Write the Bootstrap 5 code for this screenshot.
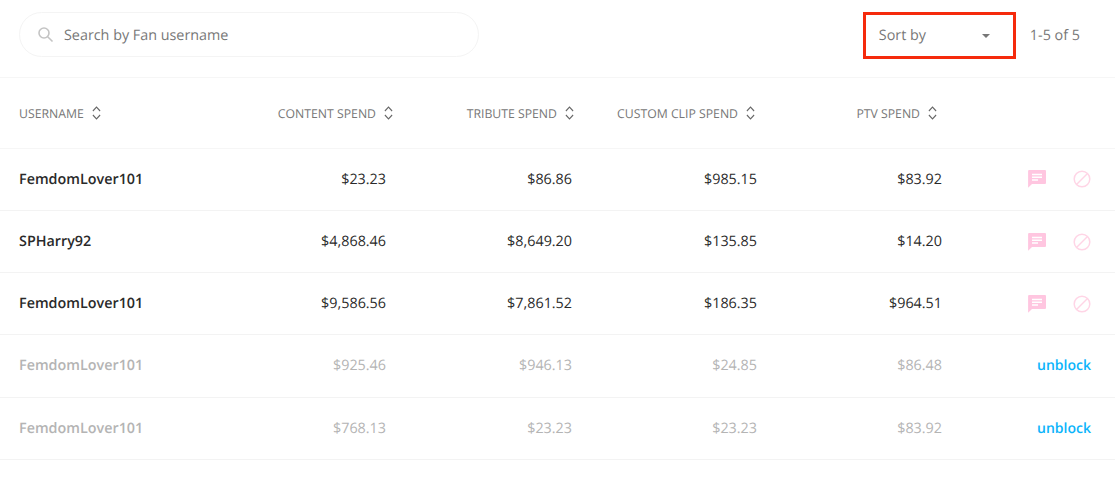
<!DOCTYPE html>
<html lang="en"><head><meta charset="utf-8"><title>Fans</title>
<link href="https://cdn.jsdelivr.net/npm/bootstrap@5.3.0/dist/css/bootstrap.min.css" rel="stylesheet">
<style>
html,body{background:#fff;font-family:"Open Sans",sans-serif;color:#222;overflow:hidden;text-rendering:geometricPrecision}
.topbar{height:78px;border-bottom:1px solid #f6f6f6;padding:12px 35px 0 19px}
.searchbox{width:460px;height:45px;border:1px solid #f4f4f4;border-radius:23px;padding-left:17px;color:#777;font-size:14.35px;gap:10px}
.searchbox span{position:relative;top:1px}
.sortbox{width:153px;height:47px;border:3px solid #f52a0c;padding:0 23px 0 13px;color:#777;font-size:14.35px;margin-right:14px}
.caretmark{width:0;height:0;border-left:4.5px solid transparent;border-right:4.5px solid transparent;border-top:4.5px solid #777}
.pagecount{font-size:14.35px;color:#777}
.fans{table-layout:fixed;width:1115px;margin:0;border-collapse:collapse}
.fans th{height:70px;font-size:12.25px;font-weight:400;color:#777;text-align:right;border-bottom:1px solid #f6f6f6;padding:2px 0 0;white-space:nowrap;vertical-align:middle}
.fans td{height:62.25px;font-size:14.35px;text-align:right;border-bottom:1px solid #f3f3f3;padding:.5px 14px 0 0;vertical-align:middle;color:#2a2a2a}
.fans th:first-child,.fans td:first-child{text-align:left;padding-left:19px}
.fans td:first-child{font-weight:600;color:#2a2a2a}
.fans th.h1{padding-right:7px}.fans th.h2{padding-right:12px}.fans th.h3{padding-right:16px}.fans th.h4{padding-right:19px}
.fans tr.blocked td{color:#b4b4b4}
.fans td.acts{padding-right:24px}
.sorter{margin-left:8px;vertical-align:-2px}
.unblock{color:#0bb4fb;font-weight:600;text-decoration:none;font-size:14px}
.acticons{gap:27px}
</style></head><body>
<div class="topbar d-flex align-items-start justify-content-between">
  <div class="searchbox d-flex align-items-center">
    <svg width="17" height="17" viewBox="0 0 17 17" fill="none" stroke="#c4c4c4" stroke-width="1.6"><circle cx="7" cy="7" r="5"/><path d="M10.7 10.7 15.500 15.500"/></svg>
    <span>Search by Fan username</span>
  </div>
  <div class="d-flex align-items-center">
    <div class="sortbox d-flex align-items-center justify-content-between"><span>Sort by</span><span class="caretmark"></span></div>
    <span class="pagecount">1-5 of 5</span>
  </div>
</div>
<table class="fans">
<colgroup><col style="width:200px"><col style="width:200px"><col style="width:186px"><col style="width:185px"><col style="width:185px"><col></colgroup>
<thead><tr>
<th>USERNAME<svg class="sorter" width="9" height="14" viewBox="0 0 10 14" preserveAspectRatio="none" fill="none" stroke="#666" stroke-width="1.2"><path d="M1 5 5 1 9 5M1 9l4 4 4-4"/></svg></th>
<th class="h1">CONTENT SPEND<svg class="sorter" width="9" height="14" viewBox="0 0 10 14" preserveAspectRatio="none" fill="none" stroke="#666" stroke-width="1.2"><path d="M1 5 5 1 9 5M1 9l4 4 4-4"/></svg></th>
<th class="h2">TRIBUTE SPEND<svg class="sorter" width="9" height="14" viewBox="0 0 10 14" preserveAspectRatio="none" fill="none" stroke="#666" stroke-width="1.2"><path d="M1 5 5 1 9 5M1 9l4 4 4-4"/></svg></th>
<th class="h3">CUSTOM CLIP SPEND<svg class="sorter" width="9" height="14" viewBox="0 0 10 14" preserveAspectRatio="none" fill="none" stroke="#666" stroke-width="1.2"><path d="M1 5 5 1 9 5M1 9l4 4 4-4"/></svg></th>
<th class="h4">PTV SPEND<svg class="sorter" width="9" height="14" viewBox="0 0 10 14" preserveAspectRatio="none" fill="none" stroke="#666" stroke-width="1.2"><path d="M1 5 5 1 9 5M1 9l4 4 4-4"/></svg></th>
<th></th></tr></thead>
<tbody>
<tr><td>FemdomLover101</td><td>$23.23</td><td>$86.86</td><td>$985.15</td><td>$83.92</td><td class="acts"><div class="acticons d-flex justify-content-end align-items-center"><svg width="18" height="18" viewBox="0 0 18 18"><path fill="#ffc6e0" d="M1 0h16a1 1 0 0 1 1 1v12a1 1 0 0 1-1 1H4l-3.900 3.800V1a1 1 0 0 1 1-1z"/><path stroke="#fff" stroke-width="1.400" d="M4 4.500h10M4 7.300h10M4 10h6"/></svg><svg width="18" height="18" viewBox="0 0 18 18" fill="none" stroke="#ffd5e6" stroke-width="1.500"><circle cx="9" cy="9" r="7.800"/><path d="M3.500 14.500 14.500 3.500"/></svg></div></td></tr>
<tr><td>SPHarry92</td><td>$4,868.46</td><td>$8,649.20</td><td>$135.85</td><td>$14.20</td><td class="acts"><div class="acticons d-flex justify-content-end align-items-center"><svg width="18" height="18" viewBox="0 0 18 18"><path fill="#ffc6e0" d="M1 0h16a1 1 0 0 1 1 1v12a1 1 0 0 1-1 1H4l-3.900 3.800V1a1 1 0 0 1 1-1z"/><path stroke="#fff" stroke-width="1.400" d="M4 4.500h10M4 7.300h10M4 10h6"/></svg><svg width="18" height="18" viewBox="0 0 18 18" fill="none" stroke="#ffd5e6" stroke-width="1.500"><circle cx="9" cy="9" r="7.800"/><path d="M3.500 14.500 14.500 3.500"/></svg></div></td></tr>
<tr><td>FemdomLover101</td><td>$9,586.56</td><td>$7,861.52</td><td>$186.35</td><td>$964.51</td><td class="acts"><div class="acticons d-flex justify-content-end align-items-center"><svg width="18" height="18" viewBox="0 0 18 18"><path fill="#ffc6e0" d="M1 0h16a1 1 0 0 1 1 1v12a1 1 0 0 1-1 1H4l-3.900 3.800V1a1 1 0 0 1 1-1z"/><path stroke="#fff" stroke-width="1.400" d="M4 4.500h10M4 7.300h10M4 10h6"/></svg><svg width="18" height="18" viewBox="0 0 18 18" fill="none" stroke="#ffd5e6" stroke-width="1.500"><circle cx="9" cy="9" r="7.800"/><path d="M3.500 14.500 14.500 3.500"/></svg></div></td></tr>
<tr class="blocked"><td>FemdomLover101</td><td>$925.46</td><td>$946.13</td><td>$24.85</td><td>$86.48</td><td class="acts"><a class="unblock" href="#">unblock</a></td></tr>
<tr class="blocked"><td>FemdomLover101</td><td>$768.13</td><td>$23.23</td><td>$23.23</td><td>$83.92</td><td class="acts"><a class="unblock" href="#">unblock</a></td></tr>
</tbody></table>
<script src="https://cdn.jsdelivr.net/npm/bootstrap@5.3.0/dist/js/bootstrap.bundle.min.js"></script>
</body></html>
